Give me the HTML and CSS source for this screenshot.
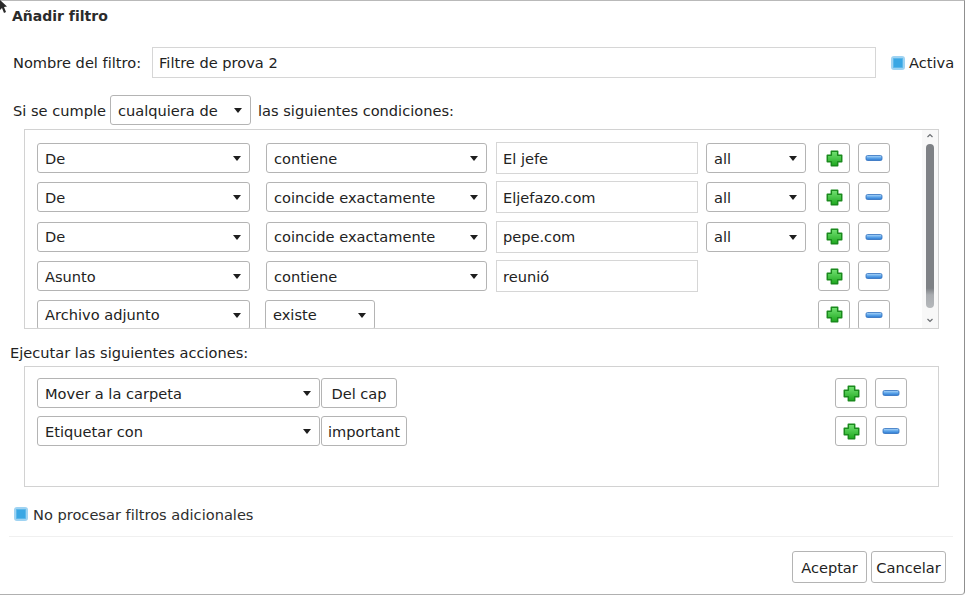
FILE: index.html
```html
<!DOCTYPE html>
<html lang="es">
<head>
<meta charset="utf-8">
<title>Añadir filtro</title>
<link rel="stylesheet" href="styles.css">
</head>
<body>
<svg class="defs" width="0" height="0" aria-hidden="true">
  <defs>
    <linearGradient id="mg" x1="0" y1="0" x2="0" y2="1"><stop offset="0" stop-color="#b3dafa"/><stop offset="0.5" stop-color="#5fa6ea"/><stop offset="1" stop-color="#2b78d0"/></linearGradient>
    <linearGradient id="pg" x1="0" y1="0" x2="0" y2="1"><stop offset="0" stop-color="#74e274"/><stop offset="1" stop-color="#1ea81e"/></linearGradient>
    <symbol id="plus" viewBox="0 0 16 16"><path d="M5 1.2 h6 v3.8 h3.8 v6 h-3.8 v3.8 h-6 v-3.8 h-3.8 v-6 h3.8 z" fill="url(#pg)" stroke="#1a8a1d" stroke-width="1.4" stroke-linejoin="round"/></symbol>
    <symbol id="minus" viewBox="0 0 18 8"><rect x="1" y="1.5" width="16" height="5" rx="1.5" fill="url(#mg)" stroke="#2f6fbe" stroke-width="0.8"/></symbol>
  </defs>
</svg>
<div class="dialog">
  <svg class="cursor" width="9" height="14" viewBox="0 0 9 14"><path d="M0 0 L7 6.5 L4 7 L6 12 L4 13 L2 8 L0 10 Z" fill="#2a2a2a"/></svg>
  <div class="title">Añadir filtro</div>

  <div class="name-row">
    <span class="name-label">Nombre del filtro:</span>
    <div class="input name-input">Filtre de prova 2</div>
    <span class="check"></span>
    <span class="check-text">Activa</span>
  </div>

  <div class="match-row">
    <span class="match-label">Si se cumple</span>
    <div class="select sel-match"><span>cualquiera de</span><span class="arrow"></span></div>
    <span class="match-after">las siguientes condiciones:</span>
  </div>

  <div class="box cond-box">
    <div class="cond-rows">
      <div class="cond-row">
        <div class="select sel-field"><span>De</span><span class="arrow"></span></div>
        <div class="select sel-op"><span>contiene</span><span class="arrow"></span></div>
        <div class="input val">El jefe</div>
        <div class="select sel-all"><span>all</span><span class="arrow"></span></div>
        <button class="icon-btn plus-btn"><svg class="plus-ico"><use href="#plus"/></svg></button>
        <button class="icon-btn minus-btn"><svg class="minus-ico"><use href="#minus"/></svg></button>
      </div>
      <div class="cond-row">
        <div class="select sel-field"><span>De</span><span class="arrow"></span></div>
        <div class="select sel-op"><span>coincide exactamente</span><span class="arrow"></span></div>
        <div class="input val">Eljefazo.com</div>
        <div class="select sel-all"><span>all</span><span class="arrow"></span></div>
        <button class="icon-btn plus-btn"><svg class="plus-ico"><use href="#plus"/></svg></button>
        <button class="icon-btn minus-btn"><svg class="minus-ico"><use href="#minus"/></svg></button>
      </div>
      <div class="cond-row">
        <div class="select sel-field"><span>De</span><span class="arrow"></span></div>
        <div class="select sel-op"><span>coincide exactamente</span><span class="arrow"></span></div>
        <div class="input val">pepe.com</div>
        <div class="select sel-all"><span>all</span><span class="arrow"></span></div>
        <button class="icon-btn plus-btn"><svg class="plus-ico"><use href="#plus"/></svg></button>
        <button class="icon-btn minus-btn"><svg class="minus-ico"><use href="#minus"/></svg></button>
      </div>
      <div class="cond-row">
        <div class="select sel-field"><span>Asunto</span><span class="arrow"></span></div>
        <div class="select sel-op"><span>contiene</span><span class="arrow"></span></div>
        <div class="input val">reunió</div>
        <button class="icon-btn plus-btn"><svg class="plus-ico"><use href="#plus"/></svg></button>
        <button class="icon-btn minus-btn"><svg class="minus-ico"><use href="#minus"/></svg></button>
      </div>
      <div class="cond-row">
        <div class="select sel-field"><span>Archivo adjunto</span><span class="arrow"></span></div>
        <div class="select sel-exists"><span>existe</span><span class="arrow"></span></div>
        <button class="icon-btn plus-btn"><svg class="plus-ico"><use href="#plus"/></svg></button>
        <button class="icon-btn minus-btn"><svg class="minus-ico"><use href="#minus"/></svg></button>
      </div>
    </div>
    <div class="scrollbar">
      <svg class="sb-arrow" width="16" height="12" viewBox="0 0 16 12"><path d="M5.5 7 L8 4.5 L10.5 7" fill="none" stroke="#6b6e72" stroke-width="1.2"/></svg>
      <div class="sb-thumb"></div>
      <svg class="sb-arrow" width="16" height="12" viewBox="0 0 16 12"><path d="M5.5 5 L8 7.5 L10.5 5" fill="none" stroke="#6b6e72" stroke-width="1.2"/></svg>
    </div>
  </div>

  <div class="section-label">Ejecutar las siguientes acciones:</div>

  <div class="box action-box">
    <div class="action-row">
      <div class="select sel-action"><span>Mover a la carpeta</span><span class="arrow"></span></div>
      <button class="text-btn btn-delcap">Del cap</button>
      <button class="icon-btn plus-btn push-right"><svg class="plus-ico"><use href="#plus"/></svg></button>
      <button class="icon-btn minus-btn"><svg class="minus-ico"><use href="#minus"/></svg></button>
    </div>
    <div class="action-row">
      <div class="select sel-action"><span>Etiquetar con</span><span class="arrow"></span></div>
      <button class="text-btn btn-important">important</button>
      <button class="icon-btn plus-btn push-right"><svg class="plus-ico"><use href="#plus"/></svg></button>
      <button class="icon-btn minus-btn"><svg class="minus-ico"><use href="#minus"/></svg></button>
    </div>
  </div>

  <div class="stop-row">
    <span class="check"></span>
    <span class="check-text">No procesar filtros adicionales</span>
  </div>

  <div class="sep"></div>

  <div class="footer">
    <button class="text-btn footer-btn">Aceptar</button>
    <button class="text-btn footer-btn">Cancelar</button>
  </div>
</div>
</body>
</html>
```

FILE: styles.css
```css
* {
  box-sizing: border-box;
}

html, body {
  margin: 0;
  padding: 0;
  background: #ffffff;
}

body {
  font-family: "DejaVu Sans", sans-serif;
  font-size: 14.6px;
  color: #222222;
}

.defs {
  position: absolute;
  width: 0;
  height: 0;
}

.dialog {
  position: relative;
  width: 965px;
  height: 595px;
  border-top: 1px solid #b9b9b9;
  border-right: 1px solid #8f8f8f;
  border-bottom: 1px solid #b0b0b0;
  border-bottom-right-radius: 4px;
  background: #ffffff;
}

.cursor {
  position: absolute;
  left: 0;
  top: -1px;
}

.title {
  padding-left: 12px;
  line-height: 30px;
  font-size: 14px;
  font-weight: bold;
  color: #2b2b2b;
}

.name-row {
  display: flex;
  align-items: center;
  height: 31px;
  margin-top: 16px;
  padding-left: 13px;
}

.name-label {
  flex: 0 0 139px;
}

.input {
  display: flex;
  align-items: center;
  border: 1px solid #d6d6d6;
  background: #fff;
  padding-left: 6px;
  white-space: nowrap;
  overflow: hidden;
}

.name-input {
  width: 724px;
  height: 31px;
}

.check {
  display: inline-block;
  width: 14px;
  height: 14px;
  border: 2px solid #9fd3f2;
  border-radius: 3px;
  background: #3aa7e4;
  box-shadow: inset 0 0 0 1px #5bb7ea;
}

.name-row .check {
  margin-left: 15px;
}

.check-text {
  margin-left: 4px;
}

.match-row {
  display: flex;
  align-items: center;
  height: 30px;
  margin-top: 17px;
  padding-left: 13px;
}

.match-label {
  flex: 0 0 97px;
}

.match-after {
  margin-left: 7px;
}

.select {
  display: flex;
  align-items: center;
  justify-content: space-between;
  height: 30px;
  padding: 0 8px 0 7px;
  border: 1px solid #b4b4b4;
  border-radius: 3px;
  background: #fff;
  white-space: nowrap;
}

.arrow {
  width: 0;
  height: 0;
  border-left: 4.5px solid transparent;
  border-right: 4.5px solid transparent;
  border-top: 5px solid #1e1e1e;
  margin-top: 1px;
}

.sel-match {
  width: 141px;
}

.box {
  margin-left: 24px;
  width: 915px;
  border: 1px solid #d2d2d2;
  background: #fff;
}

.cond-box {
  display: flex;
  height: 200px;
  margin-top: 4px;
}

.cond-rows {
  flex: 1;
  overflow: hidden;
  padding: 12px 0 0 12px;
  display: flex;
  flex-direction: column;
  gap: 9.4px;
}

.cond-row {
  display: grid;
  grid-template-columns: 213px 237px 211px 108px 44px 40px;
  align-items: center;
  height: 30px;
  flex: 0 0 30px;
}

.sel-field {
  grid-column: 1;
  width: 213px;
}

.sel-op {
  grid-column: 2;
  justify-self: end;
  width: 221px;
}

.sel-exists {
  grid-column: 2;
  justify-self: start;
  margin-left: 15px;
  width: 110px;
}

.val {
  grid-column: 3;
  justify-self: end;
  width: 202px;
  height: 32px;
}

.sel-all {
  grid-column: 4;
  justify-self: end;
  width: 100px;
}

.icon-btn {
  display: flex;
  align-items: center;
  justify-content: center;
  width: 32px;
  height: 30px;
  padding: 0;
  border: 1px solid #b4b4b4;
  border-radius: 3px;
  background: #fff;
}

.plus-ico {
  width: 17px;
  height: 17px;
  display: block;
}

.minus-ico {
  width: 18px;
  height: 8px;
  display: block;
}

.cond-row .plus-btn {
  grid-column: 5;
  justify-self: end;
}

.cond-row .minus-btn {
  grid-column: 6;
  justify-self: end;
}

.scrollbar {
  flex: 0 0 16px;
  display: flex;
  flex-direction: column;
  align-items: center;
  background: #f8f8f8;
}

.sb-arrow {
  display: block;
  flex: 0 0 12px;
}

.sb-thumb {
  width: 8px;
  height: 164px;
  margin: 2px 0 6px;
  border-radius: 4px;
  background: linear-gradient(to bottom, #7e8185 0%, #7e8185 88%, #a9acb0 92%, #b5b8bb 100%);
}

.section-label {
  line-height: 20px;
  margin-top: 14px;
  padding-left: 10px;
}

.action-box {
  height: 121px;
  margin-top: 3px;
  padding: 11px 31px 0 12px;
  display: flex;
  flex-direction: column;
  gap: 8.4px;
}

.action-row {
  display: flex;
  align-items: center;
  height: 30px;
}

.action-row .minus-btn {
  margin-left: 8px;
}

.push-right {
  margin-left: auto;
}

.sel-action {
  width: 283px;
}

.text-btn {
  display: flex;
  align-items: center;
  justify-content: center;
  height: 30px;
  padding: 0;
  border: 1px solid #b4b4b4;
  border-radius: 3px;
  background: #fff;
  font-family: "DejaVu Sans", sans-serif;
  font-size: 14.6px;
  color: #222222;
  white-space: nowrap;
}

.btn-delcap {
  width: 76px;
  margin-left: 1px;
}

.btn-important {
  width: 86px;
  margin-left: 1px;
}

.stop-row {
  display: flex;
  align-items: center;
  height: 20px;
  margin-top: 17px;
  padding-left: 14px;
}

.stop-row .check-text {
  margin-left: 5px;
  color: #2e2e2e;
}

.sep {
  height: 1px;
  margin: 12px 0 0 9px;
  width: 944px;
  background: #f0f0f0;
}

.footer {
  display: flex;
  justify-content: flex-end;
  gap: 4px;
  margin-top: 14px;
  padding-right: 18px;
}

.footer-btn {
  width: 75px;
  height: 32px;
}
```
